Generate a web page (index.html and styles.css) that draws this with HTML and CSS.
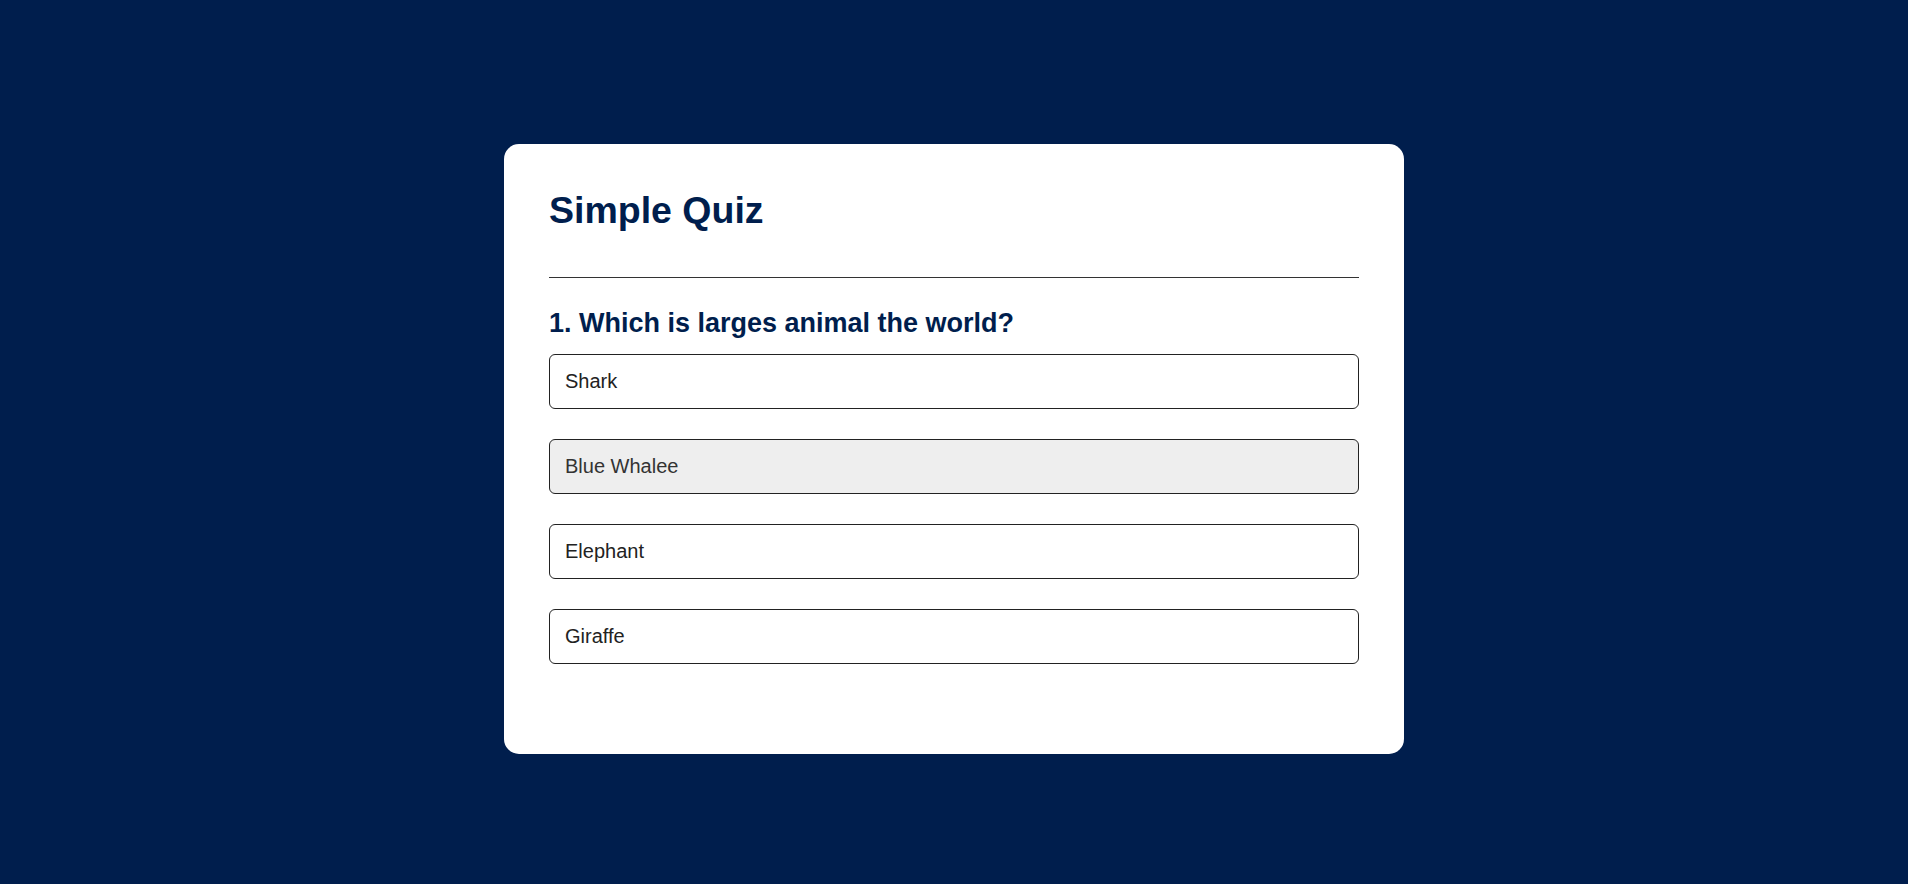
FILE: index.html
```html
<!DOCTYPE html>
<html lang="en">
<head>
<meta charset="utf-8">
<title>Simple Quiz</title>
<link rel="stylesheet" href="styles.css">
</head>
<body>
<div class="app">
  <h1 class="title">Simple Quiz</h1>
  <div class="quiz">
    <h2 class="question">1. Which is larges animal the world?</h2>
    <div class="answers">
      <button class="btn">Shark</button>
      <button class="btn btn-hover">Blue Whalee</button>
      <button class="btn">Elephant</button>
      <button class="btn">Giraffe</button>
    </div>
  </div>
</div>
</body>
</html>
```
FILE: styles.css
```css
* {
  margin: 0;
  padding: 0;
  box-sizing: border-box;
  font-family: "Liberation Sans", Arial, sans-serif;
}

html, body {
  height: 100%;
}

body {
  background: #001e4d;
  overflow: hidden;
}

.app {
  background: #fff;
  width: 900px;
  margin: 144px auto 0;
  border-radius: 15px;
  padding: 45px;
}

.title {
  font-size: 37.5px;
  color: #001e4d;
  font-weight: 700;
  border-bottom: 1px solid #333;
  padding-bottom: 45px;
}

.quiz {
  padding: 30px 0;
}

.question {
  font-size: 27px;
  color: #001e4d;
  font-weight: 700;
}

.answers {
  display: flex;
  flex-direction: column;
  gap: 30px;
  margin: 15px 0;
}

.btn {
  display: block;
  background: #fff;
  color: #222;
  font-size: 20px;
  font-weight: 400;
  width: 100%;
  border: 1px solid #222;
  padding: 15px;
  text-align: left;
  border-radius: 6px;
  cursor: pointer;
  line-height: 23px;
}

.btn-hover {
  background: #eee;
  color: #333;
}
```
